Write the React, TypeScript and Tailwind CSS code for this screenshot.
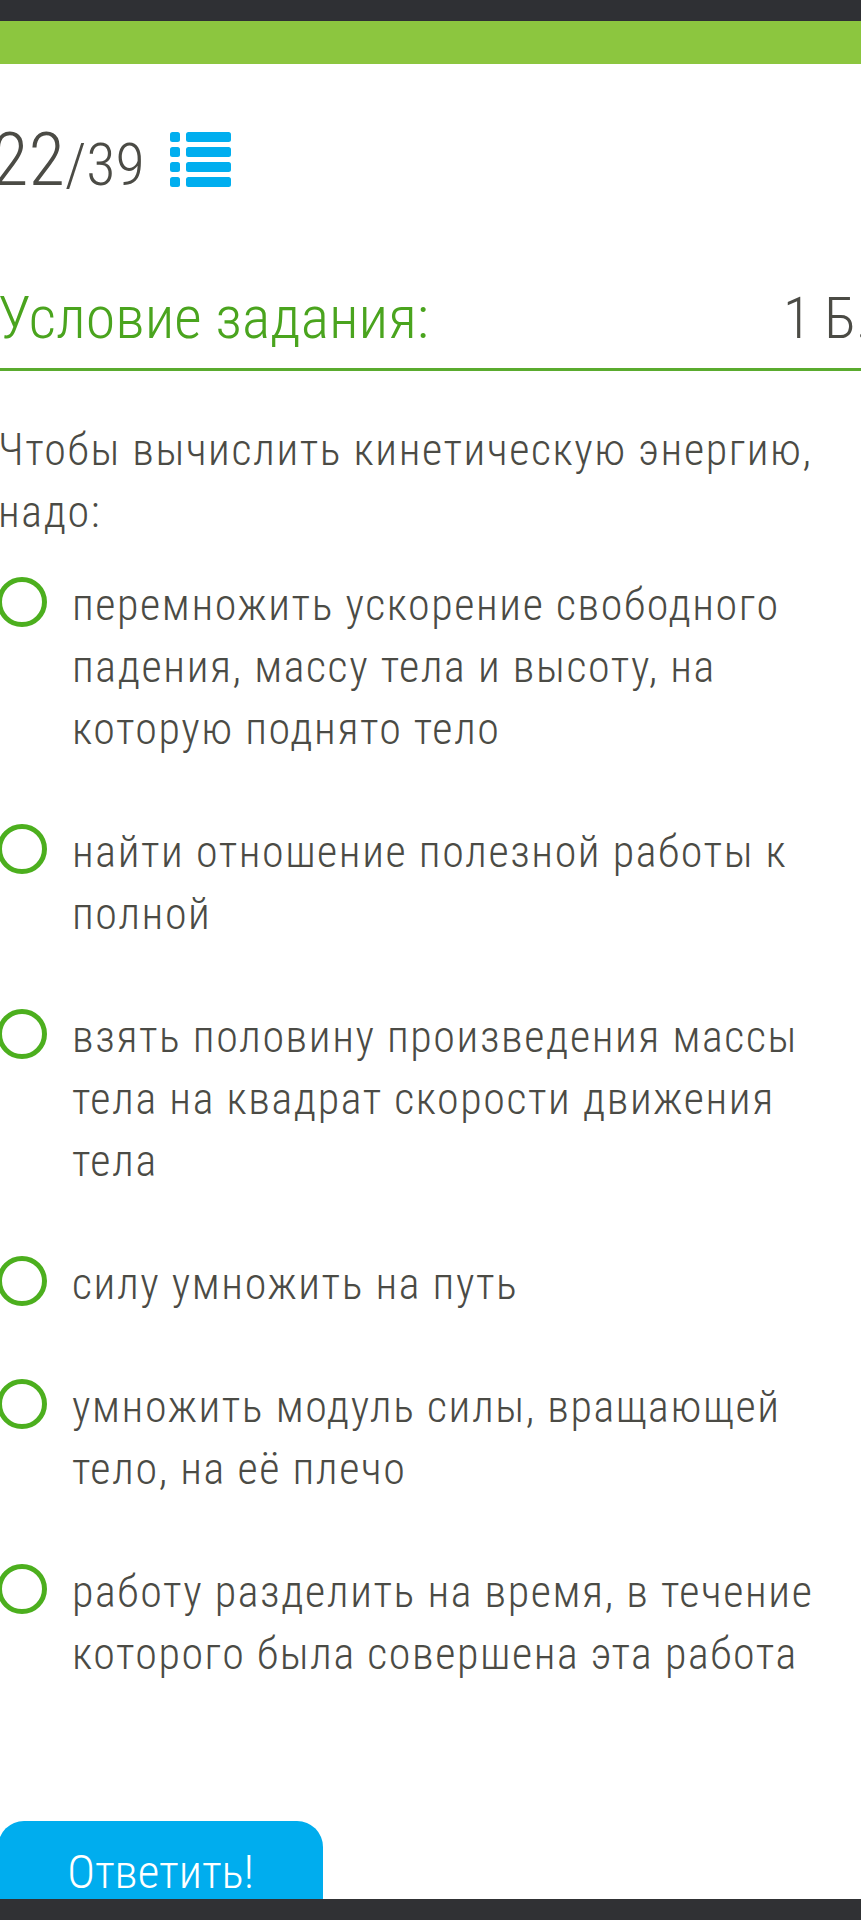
import React from "react";

const options: string[][] = [
  ["перемножить ускорение свободного", "падения, массу тела и высоту, на", "которую поднято тело"],
  ["найти отношение полезной работы к", "полной"],
  ["взять половину произведения массы", "тела на квадрат скорости движения", "тела"],
  ["силу умножить на путь"],
  ["умножить модуль силы, вращающей", "тело, на её плечо"],
  ["работу разделить на время, в течение", "которого была совершена эта работа"],
];

function ListIcon() {
  return (
    <svg width="61" height="55" viewBox="0 0 61 55" fill="#00aeef">
      {[0, 15, 30, 45].map((y) => (
        <g key={y}>
          <rect x="0" y={y} width="10" height="10" rx="2.5" />
          <rect x="16" y={y} width="45" height="10" rx="2.5" />
        </g>
      ))}
    </svg>
  );
}

export default function App() {
  return (
    <div
      className="h-[1920px] w-[861px] overflow-hidden flex flex-col bg-white font-light font-stretch-condensed"
      style={{ fontFamily: '"Roboto Condensed", Roboto, "Noto Sans", sans-serif' }}
    >
      <div className="h-[21px] shrink-0 bg-[#2f3034]" />
      <div className="h-[43px] shrink-0 bg-[#8cc63f]" />
      <div className="flex-1 overflow-hidden">
        <div className="-ml-[2px] w-[872px] text-[#4b4b45]">
          <div className="mt-[58px] -ml-[6px] flex items-center gap-[25px]">
            <div className="flex items-baseline whitespace-nowrap">
              <span className="text-[75px] leading-[75px]">22</span>
              <span className="text-[60px] leading-[60px]">/39</span>
            </div>
            <ListIcon />
          </div>

          <div className="mt-[91px] flex items-baseline justify-between pb-[20px]">
            <span className="text-[60px] leading-[60px] text-[#4aa41e]">Условие задания:</span>
            <span className="text-[58px] leading-[60px] whitespace-nowrap">1 Б.</span>
          </div>
          <div className="h-[3px] bg-[#5aab2e]" />

          <div className="mt-[48px] text-[44px] leading-[62px] tracking-[1.6px]">
            <div>Чтобы вычислить кинетическую энергию,</div>
            <div>надо:</div>
          </div>

          <div className="mt-[31px] flex flex-col gap-[61px]">
            {options.map((lines, i) => (
              <div key={i} className="flex items-start gap-[25px]">
                <div className="mt-[3px] -ml-[1px] h-[50px] w-[50px] shrink-0 rounded-full border-[5px] border-[#4caf1e]" />
                <div className="text-[44px] leading-[62px] tracking-[1.6px]">
                  {lines.map((l, j) => (
                    <div key={j} className="whitespace-nowrap">{l}</div>
                  ))}
                </div>
              </div>
            ))}
          </div>

          <div className="mt-[136px] flex h-[102px] w-[325px] items-center justify-center rounded-[26px] bg-[#00adee] text-[47px] leading-[48px] text-white">
            Ответить!
          </div>
        </div>
      </div>
      <div className="h-[21px] shrink-0 bg-[#303134]" />
    </div>
  );
}
